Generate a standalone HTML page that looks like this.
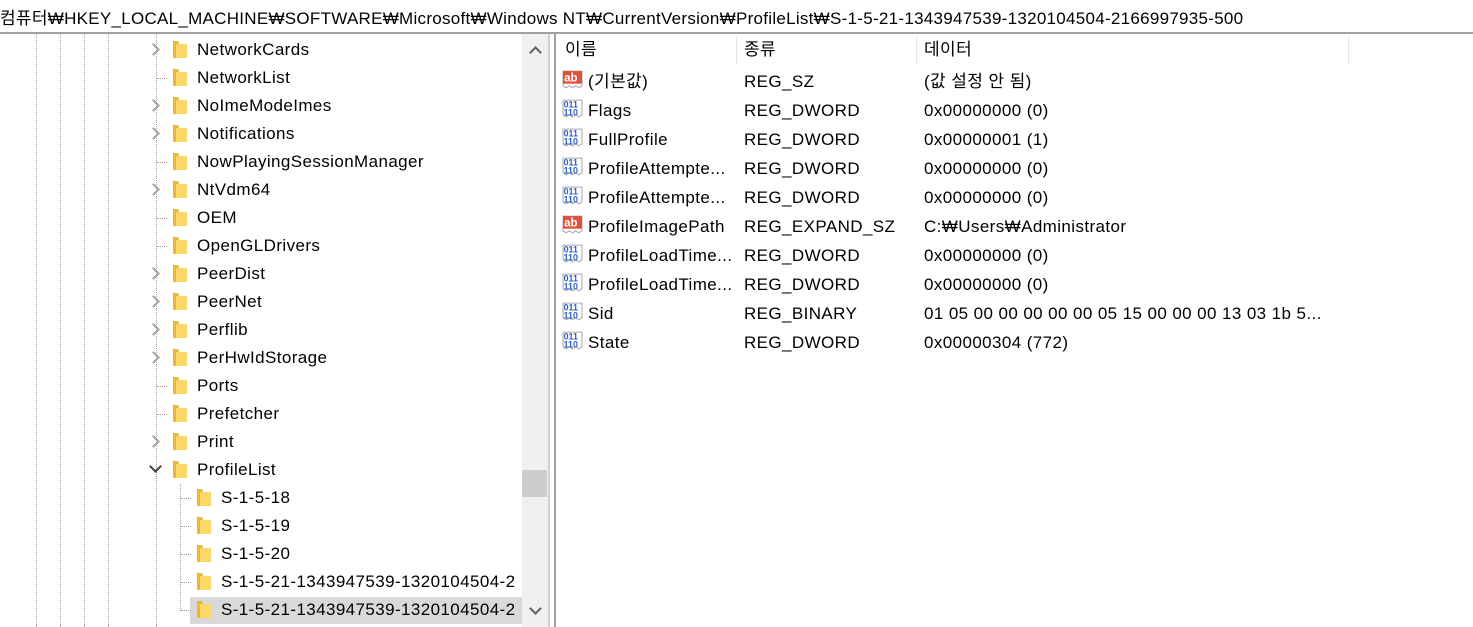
<!DOCTYPE html>
<html><head><meta charset="utf-8"><style>
body{margin:0;width:1473px;height:627px;overflow:hidden;background:#fff;font-family:"Liberation Sans","Noto Sans CJK KR",sans-serif;font-size:17px;color:#000;position:relative}
.a{position:absolute;white-space:nowrap;line-height:20px;letter-spacing:0.4px}
.vl{position:absolute;width:0;border-left:1px dotted #a0a0a0}
.hl{position:absolute;height:0;border-top:1px dotted #a0a0a0}
.fd{position:absolute;width:16px;height:18px}
.chev{position:absolute;width:7px;height:7px;border-right:2px solid #a0a0a0;border-bottom:2px solid #a0a0a0;transform:rotate(-45deg)}
.ic{position:absolute;width:21px;height:21px}
</style></head><body>
<div class="a" style="left:0;top:9px;font-size:17px;letter-spacing:0.28px">컴퓨터₩HKEY_LOCAL_MACHINE₩SOFTWARE₩Microsoft₩Windows NT₩CurrentVersion₩ProfileList₩S-1-5-21-1343947539-1320104504-2166997935-500</div>
<div class="a" style="left:0;top:32px;width:1473px;height:2px;background:#a0a0a0"></div>
<div class="a" style="left:522px;top:34px;width:26px;height:593px;background:#f0f0f0"></div>
<div class="a" style="left:522px;top:470px;width:25px;height:27px;background:#cdcdcd"></div>
<div class="chev" style="left:531px;top:48px;transform:rotate(-135deg);border-color:#606060"></div>
<div class="chev" style="left:531px;top:604px;transform:rotate(45deg);border-color:#606060"></div>
<div class="a" style="left:548px;top:34px;width:2px;height:593px;background:#d0d0d0"></div>
<div class="a" style="left:554px;top:34px;width:2px;height:593px;background:#a0a0a0"></div>
<div class="a" style="left:190px;top:597px;width:332px;height:27px;background:#d9d9d9"></div>
<div class="vl" style="left:36px;top:34px;height:593px"></div>
<div class="vl" style="left:60px;top:34px;height:593px"></div>
<div class="vl" style="left:84px;top:34px;height:593px"></div>
<div class="vl" style="left:108px;top:34px;height:593px"></div>
<div class="vl" style="left:156px;top:34px;height:593px"></div>
<div class="vl" style="left:180px;top:484px;height:127px"></div>
<div id="tree"></div>
<div class="a" style="left:736px;top:36px;width:1px;height:28px;background:#e5e5e5"></div>
<div class="a" style="left:916px;top:36px;width:1px;height:28px;background:#e5e5e5"></div>
<div class="a" style="left:1348px;top:36px;width:1px;height:28px;background:#e5e5e5"></div>
<div class="a" style="left:565px;top:40px">이름</div>
<div class="a" style="left:744px;top:40px">종류</div>
<div class="a" style="left:924px;top:40px">데이터</div>
<div id="vals"></div>
<script>
var t=["NetworkCards",1,"NetworkList",0,"NoImeModeImes",1,"Notifications",1,"NowPlayingSessionManager",0,"NtVdm64",1,"OEM",0,"OpenGLDrivers",0,"PeerDist",1,"PeerNet",1,"Perflib",1,"PerHwIdStorage",1,"Ports",0,"Prefetcher",0,"Print",1,"ProfileList",2];
var h="";
var fold=function(x,y){return '<svg class="fd" style="left:'+x+'px;top:'+y+'px" viewBox="0 0 16 18"><path d="M1 1h5l1 2v15H1z" fill="#e8b73e"/><path d="M4 4h11v14H4z" fill="#ffd766"/></svg>';};
for(var i=0;i<t.length;i+=2){var y=50+28*(i/2);
if(t[i+1]==1)h+='<div class="chev" style="left:149px;top:'+(y-5)+'px"></div>';
else if(t[i+1]==2)h+='<div class="chev" style="left:151px;top:'+(y-8)+'px;transform:rotate(45deg);border-color:#404040"></div>';
else h+='<div class="hl" style="left:157px;top:'+y+'px;width:10px"></div>';
h+=fold(172,y-10)+'<div class="a" style="left:197px;top:'+(y-10)+'px">'+t[i]+'</div>';}
var c=["S-1-5-18","S-1-5-19","S-1-5-20","S-1-5-21-1343947539-1320104504-2","S-1-5-21-1343947539-1320104504-2"];
for(var j=0;j<5;j++){var y=498+28*j;h+='<div class="hl" style="left:181px;top:'+y+'px;width:10px"></div>'+fold(196,y-10)+'<div class="a" style="left:221px;top:'+(y-10)+'px;letter-spacing:0.4px">'+c[j]+'</div>';}
document.getElementById('tree').innerHTML=h;
var v=[["s","(기본값)","REG_SZ","(값 설정 안 됨)"],["d","Flags","REG_DWORD","0x00000000 (0)"],["d","FullProfile","REG_DWORD","0x00000001 (1)"],["d","ProfileAttempte...","REG_DWORD","0x00000000 (0)"],["d","ProfileAttempte...","REG_DWORD","0x00000000 (0)"],["s","ProfileImagePath","REG_EXPAND_SZ","C:₩Users₩Administrator"],["d","ProfileLoadTime...","REG_DWORD","0x00000000 (0)"],["d","ProfileLoadTime...","REG_DWORD","0x00000000 (0)"],["d","Sid","REG_BINARY","01 05 00 00 00 00 00 05 15 00 00 00 13 03 1b 5..."],["d","State","REG_DWORD","0x00000304 (772)"]];
h="";
for(var k=0;k<v.length;k++){var y=82+29*k;
if(v[k][0]=="s")h+='<svg class="ic" style="left:562px;top:'+(y-13)+'px" viewBox="0 0 20 20"><path d="M1 2h18v14l-3 2-3-2-3 2-3-2-3 2-3-2z" fill="#fff" stroke="#aaa"/><rect x="1" y="2" width="18" height="12" fill="#e0503a"/><text x="2" y="12" font-size="11" font-weight="bold" fill="#fff" font-family="Liberation Sans">ab</text></svg>';
else h+='<svg class="ic" style="left:562px;top:'+(y-13)+'px" viewBox="0 0 20 20"><path d="M1 2h18v14l-3 2-3-2-3 2-3-2-3 2-3-2z" fill="#fff" stroke="#aaa"/><text x="1.5" y="9" font-size="8.5" font-weight="bold" fill="#2d5fc8" font-family="Liberation Sans">011</text><text x="1.5" y="16.5" font-size="8.5" font-weight="bold" fill="#2d5fc8" font-family="Liberation Sans">110</text></svg>';
h+='<div class="a" style="left:588px;top:'+(y-10)+'px">'+v[k][1]+'</div><div class="a" style="left:744px;top:'+(y-10)+'px">'+v[k][2]+'</div><div class="a" style="left:924px;top:'+(y-10)+'px">'+v[k][3]+'</div>';}
document.getElementById('vals').innerHTML=h;
</script>
</body></html>
